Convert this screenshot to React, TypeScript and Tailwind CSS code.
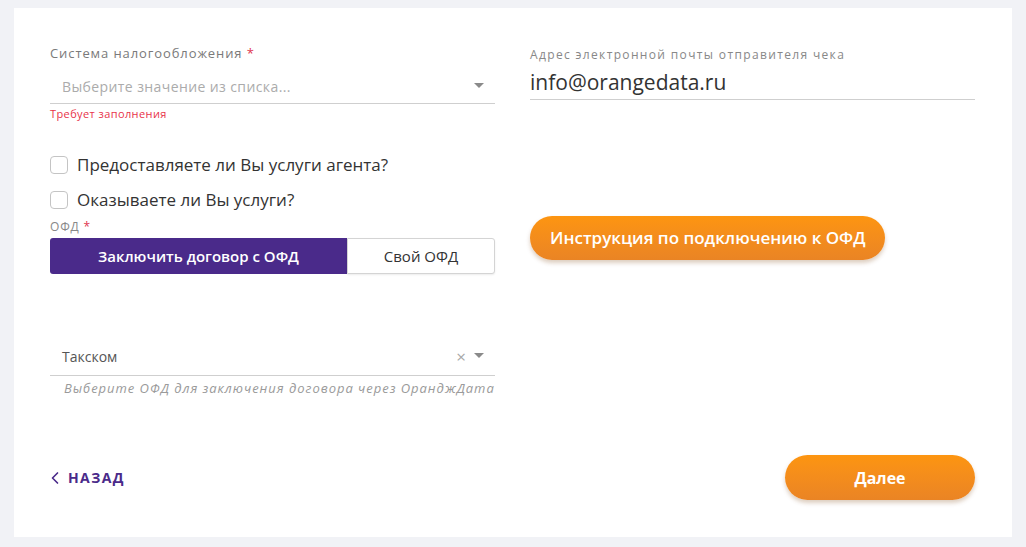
import { ChevronLeft } from 'lucide-react';

function Caret() {
  return (
    <svg width="10" height="6" viewBox="0 0 10 6" className="shrink-0">
      <path d="M0 0 L10 0 L5 5 Z" fill="#8a8a8a" />
    </svg>
  );
}

function Checkbox({ label }: { label: string }) {
  return (
    <label className="flex items-center h-6 gap-[9px] cursor-pointer">
      <span className="w-[18px] h-[18px] rounded-[4px] border border-[#c4c4c4] bg-white shrink-0" />
      <span className="text-[17px] text-[#333]">{label}</span>
    </label>
  );
}

export default function App() {
  return (
    <div
      className="min-h-[547px] w-[1026px] bg-[#f1f2f6] pt-[8px] pl-[14px]"
      style={{ fontFamily: '"Open Sans", "Noto Sans", sans-serif' }}
    >
      <div className="w-[998px] h-[529px] bg-white pt-[37px] pl-[36px] pr-[37px] flex flex-col">
        <div className="grid grid-cols-[445px_445px] gap-x-[35px]">
          {/* left column */}
          <div className="flex flex-col">
            <div className="text-[13px] leading-[16px] tracking-[0.9px] text-[#7a7a7a]">
              Система налогообложения <span className="text-[#e0354f]">*</span>
            </div>
            <div className="mt-[8px] h-[35px] border-b border-[#cfcfcf] flex items-center pl-[12px] pr-[11px]">
              <span className="flex-1 text-[14px] tracking-[0.4px] text-[#ababab]">Выберите значение из списка...</span>
              <Caret />
            </div>
            <div className="mt-[3px] text-[11px] leading-[14px] tracking-[0.4px] text-[#e8334a]">Требует заполнения</div>

            <div className="mt-[32px]">
              <Checkbox label="Предоставляете ли Вы услуги агента?" />
            </div>
            <div className="mt-[11px]">
              <Checkbox label="Оказываете ли Вы услуги?" />
            </div>

            <div className="mt-[8px] text-[12px] leading-[14px] tracking-[0.8px] text-[#888]">
              ОФД <span className="text-[#e0354f]">*</span>
            </div>
            <div className="mt-[4px] flex h-[36px]">
              <button className="w-[297px] rounded-l-[3px] bg-[#4a2a8a] text-white text-[15px] font-semibold">
                Заключить договор с ОФД
              </button>
              <button className="flex-1 rounded-r-[3px] border border-[#d4d4d4] bg-white text-[15px] font-medium text-[#333] shadow-[0_1px_2px_rgba(0,0,0,0.08)]">
                Свой ОФД
              </button>
            </div>

            <div className="mt-[67px] h-[35px] pb-[4px] border-b border-[#cfcfcf] flex items-center pl-[12px] pr-[11px]">
              <span className="flex-1 text-[14px] text-[#555]">Такском</span>
              <span className="text-[17px] leading-none text-[#a8a8a8] mr-[8px]">×</span>
              <Caret />
            </div>
            <div className="mt-[4px] pl-[14px] text-[13px] leading-[16px] tracking-[0.97px] italic text-[#9a9a9a] whitespace-nowrap">
              Выберите ОФД для заключения договора через ОранджДата
            </div>
          </div>

          {/* right column */}
          <div className="flex flex-col items-start">
            <div className="text-[12px] leading-[16px] tracking-[1.35px] text-[#888] mt-[2px]">
              Адрес электронной почты отправителя чека
            </div>
            <div className="mt-[3px] w-full h-[34px] border-b border-[#cfcfcf] flex items-center">
              <span className="text-[21px] text-[#333]">info@orangedata.ru</span>
            </div>
            <button className="mt-[116px] h-[44px] px-[20px] rounded-full bg-gradient-to-b from-[#fd9510] to-[#ea8424] text-white text-[17px] font-semibold shadow-[0_3px_4px_rgba(120,60,0,0.25)]">
              Инструкция по подключению к ОФД
            </button>
          </div>
        </div>

        <div className="mt-[59px] flex items-center justify-between">
          <button className="flex items-center gap-[3px] text-[#4a2a8a] text-[14px] font-bold tracking-[1.4px]">
            <ChevronLeft className="w-[20px] h-[20px] -ml-[5px]" strokeWidth={2} />
            НАЗАД
          </button>
          <button className="w-[190px] h-[45px] rounded-full bg-gradient-to-b from-[#fd9510] to-[#ea8424] text-white text-[16px] font-bold shadow-[0_3px_4px_rgba(120,60,0,0.25)]">
            Далее
          </button>
        </div>
      </div>
    </div>
  );
}
